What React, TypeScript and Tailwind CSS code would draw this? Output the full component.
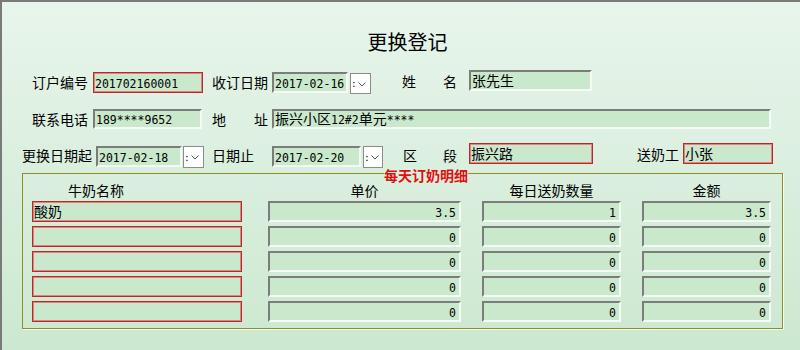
import React from 'react';

const cjk = "font-['Noto_Sans_CJK_SC',sans-serif]";
const mono = "font-['DejaVu_Sans_Mono','Noto_Sans_CJK_SC',monospace] text-[11.5px]";

// split ascii runs so digits get the narrow half-width look
const Mixed = ({ s }: { s: string }) => (
  <span className="whitespace-nowrap">
    {s.split(/([\x00-\x7f]+)/).map((p, i) =>
      /^[\x00-\x7f]+$/.test(p) ? (
        <span key={i} className={mono}>{p}</span>
      ) : (
        <span key={i}>{p}</span>
      )
    )}
  </span>
);

const sunken =
  'border-2 border-t-[#7c7c7c] border-l-[#7c7c7c] border-r-[#f6faf6] border-b-[#f6faf6] bg-[#cae8cc]';
const redBox = 'border border-[#b8282a] shadow-[inset_0_0_0_1px_#e28383] bg-[#cae8cc]';

type BoxProps = {
  w: string;
  ml: string;
  mt?: string;
  h?: string;
  red?: boolean;
  right?: boolean;
  value?: string;
};

const Box = ({ w, ml, mt = 'mt-0', h = 'h-[21px]', red, right, value = '' }: BoxProps) => (
  <div
    className={`${w} ${ml} ${mt} ${h} shrink-0 flex items-center overflow-hidden whitespace-nowrap text-[14px] text-black ${
      red ? redBox : sunken
    } ${right ? 'justify-end pr-[3px]' : 'pl-[1px]'}`}
  >
    <Mixed s={value} />
  </div>
);

const Drop = ({ ml, mt, w = 'w-[21px]', h = 'h-[21px]' }: { ml: string; mt: string; w?: string; h?: string }) => (
  <div className={`${w} ${h} ${ml} ${mt} shrink-0 bg-white border border-[#8c8c8c] flex items-center`}>
    <span className="font-['DejaVu_Sans',sans-serif] text-[11px] leading-none pl-[1px] text-black">:</span>
    <svg width="8" height="5" viewBox="0 0 8 5" className="ml-[2px] mt-[1px]">
      <path d="M0.5 0.5 L4 4 L7.5 0.5" fill="none" stroke="#555" strokeWidth="1" />
    </svg>
  </div>
);

const Label = ({ text, w, ml, h = 'h-[24px] leading-[24px]' }: { text: string; w: string; ml: string; h?: string }) => (
  <div className={`${w} ${ml} ${h} shrink-0 whitespace-nowrap text-[14px] text-black`}>{text}</div>
);

const rows = [
  { name: '酸奶', price: '3.5', qty: '1', amount: '3.5' },
  { name: '', price: '0', qty: '0', amount: '0' },
  { name: '', price: '0', qty: '0', amount: '0' },
  { name: '', price: '0', qty: '0', amount: '0' },
  { name: '', price: '0', qty: '0', amount: '0' },
];

export default function App() {
  return (
    <div
      className={`w-[800px] h-[350px] overflow-hidden border-l-2 border-t-2 border-[#7a7a7a] bg-gradient-to-b from-[#e8f5ec] to-[#cce8d0] ${cjk}`}
    >
      <div className="mt-[28px] h-[24px] leading-[24px] pl-[13px] text-center text-[20px] text-black">更换登记</div>

      {/* row 1 */}
      <div className="mt-[16px] h-[24px] flex items-start">
        <Label text="订户编号" w="w-[56px]" ml="ml-[30px]" />
        <Box w="w-[110px]" ml="ml-[5px]" mt="mt-[2px]" red value="201702160001" />
        <Label text="收订日期" w="w-[56px]" ml="ml-[9px]" />
        <Box w="w-[76px]" ml="ml-[4px]" mt="mt-[2px]" value="2017-02-16" />
        <Drop ml="ml-[2px]" mt="mt-[3px]" />
        <Label text="姓" w="w-[14px]" ml="ml-[31px]" h="h-[22px] leading-[22px]" />
        <Label text="名" w="w-[14px]" ml="ml-[27px]" h="h-[22px] leading-[22px]" />
        <Box w="w-[123px]" ml="ml-[12px]" value="张先生" />
      </div>

      {/* row 2 */}
      <div className="mt-[15px] h-[20px] flex items-start">
        <Label text="联系电话" w="w-[56px]" ml="ml-[30px]" h="h-[20px] leading-[20px]" />
        <Box w="w-[109px]" ml="ml-[5px]" h="h-[20px]" value="189****9652" />
        <Label text="地" w="w-[14px]" ml="ml-[10px]" h="h-[20px] leading-[20px]" />
        <Label text="址" w="w-[14px]" ml="ml-[28px]" h="h-[20px] leading-[20px]" />
        <Box w="w-[499px]" ml="ml-[4px]" h="h-[20px]" value="振兴小区12#2单元****" />
      </div>

      {/* row 3 */}
      <div className="mt-[14px] h-[25px] flex items-start">
        <Label text="更换日期起" w="w-[70px]" ml="ml-[20px]" h="mt-[2px] h-[20px] leading-[20px]" />
        <Box w="w-[86px]" ml="ml-[4px]" mt="mt-[3px]" value="2017-02-18" />
        <Drop ml="ml-[1px]" mt="mt-[3px]" h="h-[22px]" />
        <Label text="日期止" w="w-[42px]" ml="ml-[8px]" h="mt-[2px] h-[20px] leading-[20px]" />
        <Box w="w-[89px]" ml="ml-[18px]" mt="mt-[3px]" value="2017-02-20" />
        <Drop ml="ml-[2px]" mt="mt-[3px]" w="w-[20px]" h="h-[22px]" />
        <Label text="区" w="w-[14px]" ml="ml-[20px]" h="mt-[2px] h-[20px] leading-[20px]" />
        <Label text="段" w="w-[14px]" ml="ml-[26px]" h="mt-[2px] h-[20px] leading-[20px]" />
        <Box w="w-[124px]" ml="ml-[12px]" red value="振兴路" />
        <Label text="送奶工" w="w-[42px]" ml="ml-[44px]" h="h-[22px] leading-[22px]" />
        <Box w="w-[90px]" ml="ml-[4px]" red value="小张" />
      </div>

      {/* detail group */}
      <div className="relative mt-[5px] ml-[20px] w-[761px] h-[156px] border border-[#8e8e28] shadow-[1px_1px_0_#f4faf4] pl-[9px]">
        <span className="absolute left-[361px] top-[-6px] h-[14px] leading-[14px] bg-[#dbefde] text-[14px] font-bold text-[#e01010] whitespace-nowrap">
          每天订奶明细
        </span>
        <div className="h-[27px] pt-[8px] flex text-[14px] leading-[16px] text-black">
          <div className="w-[210px] pl-[36px]">牛奶名称</div>
          <div className="w-[193px] ml-[26px] text-center">单价</div>
          <div className="w-[139px] ml-[21px] text-center">每日送奶数量</div>
          <div className="w-[129px] ml-[21px] text-center">金额</div>
        </div>
        <div className="flex flex-col gap-[4px]">
          {rows.map((r, i) => (
            <div key={i} className="flex">
              <Box w="w-[210px]" ml="ml-0" red value={r.name} />
              <Box w="w-[193px]" ml="ml-[26px]" right value={r.price} />
              <Box w="w-[139px]" ml="ml-[21px]" right value={r.qty} />
              <Box w="w-[129px]" ml="ml-[21px]" right value={r.amount} />
            </div>
          ))}
        </div>
      </div>
    </div>
  );
}
